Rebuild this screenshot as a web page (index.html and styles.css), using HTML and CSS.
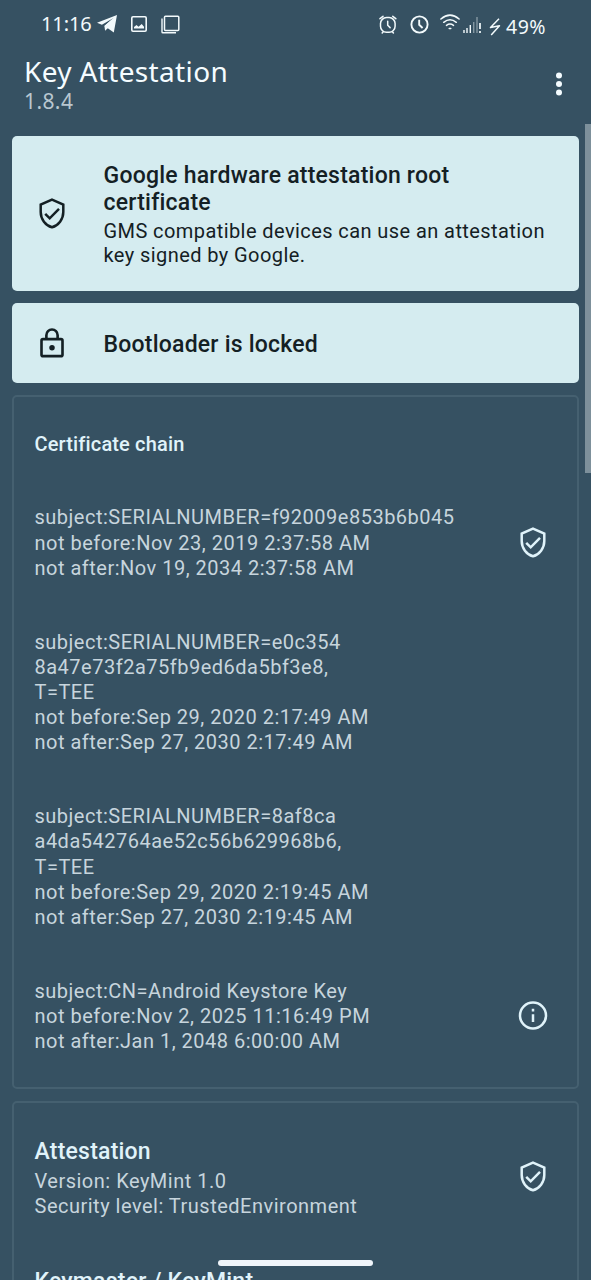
FILE: index.html
```html
<!DOCTYPE html>
<html lang="en">
<head>
<meta charset="utf-8">
<title>Key Attestation</title>
<link rel="stylesheet" href="styles.css">
</head>
<body>
<svg class="defs" width="0" height="0" aria-hidden="true">
  <symbol id="shield" viewBox="0 0 26 31">
    <path d="M13 1.700 24.300 6.500V14c0 7.200-4.800 13.400-11.300 15.300C6.500 27.400 1.700 21.200 1.700 14V6.500z" fill="none" stroke="currentColor" stroke-width="2.500"/>
    <path d="m6.200 15.800 4.500 4.500 9.300-9.500" fill="none" stroke="currentColor" stroke-width="2.500"/>
  </symbol>
</svg>
<div class="screen">
  <div class="status">
    <div class="status-left">
      <span class="clock">11:16</span>
      <svg class="ic-telegram" width="20" height="18" viewBox="0 0 20 18"><path d="M0 7.800 20 0l-3.200 17.500-6-4.300-2.700 2.600-.7-4.800L16.500 3 4.900 9.800z" fill="currentColor"/><path d="M7.400 11 17 2.500l-6.200 10.700z" fill="currentColor"/></svg>
      <svg class="ic-image" width="16" height="16" viewBox="0 0 16 16"><rect x=".8" y=".8" width="14.400" height="14.400" rx="1.200" fill="none" stroke="currentColor" stroke-width="1.600"/><path d="M3 12.500V11l2.500-2 2 1.700L10.700 8l2.300 2.800v1.700z" fill="currentColor"/></svg>
      <svg class="ic-copy" width="19" height="19" viewBox="0 0 19 19" fill="none" stroke="currentColor"><rect x="3.500" y="1.200" width="14.300" height="14.300" rx="1" stroke-width="1.500"/><path d="M1 3.500V17q0 .8.8.8H15" stroke-width="1.400"/></svg>
    </div>
    <div class="status-right">
      <svg class="ic-alarm" width="18" height="19" viewBox="0 0 18 19" fill="none" stroke="currentColor" stroke-width="1.500" stroke-linecap="round"><rect x="1.500" y="2.600" width="14.600" height="14.600" rx="6"/><path d="M1 3.700 4 1.300M16.800 3.700l-3-2.400M8.700 6.200v4l2.400 2.400M4 17l-.8 1M13.600 17l.8 1"/></svg>
      <svg class="ic-clock" width="19" height="19" viewBox="0 0 19 19" fill="none" stroke="currentColor" stroke-width="1.900"><circle cx="9.500" cy="9.500" r="8.100"/><path d="M9.200 4.800v5l3.400 3.200"/></svg>
      <svg class="ic-wifi" width="20" height="16" viewBox="0 0 20 16" fill="none" stroke="currentColor" stroke-width="1.500" stroke-linecap="round"><path d="M.9 5Q10-2.700 19.100 5M3.700 8.300q6.300-5.200 12.600 0M6.500 11.400q3.500-2.600 7 0M9.200 14.600h1.600"/></svg>
      <svg class="ic-signal" width="18" height="17" viewBox="0 0 18 17" stroke="currentColor" fill="none" stroke-width="1.400"><path d="M1 17v-3M4 17v-5M7.300 17V9"/><path d="M10.700 17V6M14 17V1" opacity=".42"/><path d="M17 7v6M17 15v2" stroke-width="1.700"/></svg>
      <svg class="ic-bolt" width="12" height="18" viewBox="0 0 12 18"><path d="M10 .8 1.500 9.600l9-1.800L2.200 17" fill="none" stroke="currentColor" stroke-width="1.500" stroke-linejoin="round"/></svg>
      <span class="battery">49%</span>
    </div>
  </div>
  <header class="appbar">
    <div>
      <div class="app-title">Key Attestation</div>
      <div class="app-version">1.8.4</div>
    </div>
    <svg class="menu" width="8" height="24" viewBox="0 0 8 24" fill="currentColor"><circle cx="4" cy="3.400" r="3"/><circle cx="4" cy="12" r="3"/><circle cx="4" cy="20.600" r="3"/></svg>
  </header>
  <main class="cards">
    <section class="card solid root">
      <svg class="shield"><use href="#shield"/></svg>
      <div>
        <h2 class="title">Google hardware attestation root<br>certificate</h2>
        <p class="body">GMS compatible devices can use an attestation<br>key signed by Google.</p>
      </div>
    </section>
    <section class="card solid boot">
      <svg class="icon" viewBox="0 0 24 24" fill="none" stroke="currentColor" stroke-width="2.100"><rect x="3.600" y="8.500" width="16.800" height="13.600" rx="1.200"/><path d="M7.500 8.500V5.300a4.500 4.500 0 0 1 9 0v3.200"/><circle cx="12" cy="15.300" r="2.200" fill="currentColor" stroke="none"/></svg>
      <h2 class="title">Bootloader is locked</h2>
    </section>
    <section class="card outline chain">
      <h3 class="subtitle">Certificate chain</h3>
      <div class="entry">
        <p>subject:SERIALNUMBER=f92009e853b6b045<br>not before:Nov 23, 2019 2:37:58 AM<br>not after:Nov 19, 2034 2:37:58 AM</p>
        <svg class="shield"><use href="#shield"/></svg>
      </div>
      <div class="entry">
        <p>subject:SERIALNUMBER=e0c354<br>8a47e73f2a75fb9ed6da5bf3e8,<br>T=TEE<br>not before:Sep 29, 2020 2:17:49 AM<br>not after:Sep 27, 2030 2:17:49 AM</p>
      </div>
      <div class="entry">
        <p>subject:SERIALNUMBER=8af8ca<br>a4da542764ae52c56b629968b6,<br>T=TEE<br>not before:Sep 29, 2020 2:19:45 AM<br>not after:Sep 27, 2030 2:19:45 AM</p>
      </div>
      <div class="entry">
        <p>subject:CN=Android Keystore Key<br>not before:Nov 2, 2025 11:16:49 PM<br>not after:Jan 1, 2048 6:00:00 AM</p>
        <svg class="icon info" viewBox="0 0 24 24" fill="none" stroke="currentColor" stroke-width="2"><circle cx="12" cy="12" r="10.400"/><path d="M12 11v6.200M12 6.600v2.200"/></svg>
      </div>
    </section>
    <section class="card outline attest">
      <div class="entry">
        <div>
          <h2 class="item-title">Attestation</h2>
          <p>Version: KeyMint 1.0<br>Security level: TrustedEnvironment</p>
        </div>
        <svg class="shield"><use href="#shield"/></svg>
      </div>
      <h2 class="item-title">Keymaster / KeyMint</h2>
    </section>
  </main>
  <div class="scrollbar"></div>
  <div class="home-bar"></div>
</div>
</body>
</html>
```
FILE: styles.css
```css
* { box-sizing: border-box; }
body { margin: 0; background: #365162; }
h2, h3, p { margin: 0; }
svg { display: block; flex: none; }
.defs { position: absolute; }

.screen {
  position: relative;
  width: 591px;
  height: 1280px;
  overflow: hidden;
  background: #365162;
  color: #e0f3fa;
  font-family: Roboto, sans-serif;
  white-space: nowrap;
}

.status {
  display: flex;
  justify-content: space-between;
  height: 48px;
  padding: 0 45px 0 41px;
  color: #f3fafc;
  font-family: "Noto Sans", sans-serif;
}
.status-left, .status-right { display: flex; align-items: center; height: 48px; }
.clock { width: 56px; margin-top: -2px; font-size: 20px; letter-spacing: -0.1px; }
.ic-image { margin-left: 14px; }
.ic-copy { margin-left: 14px; }
.ic-clock { margin-left: 13px; }
.ic-wifi { margin: -4px 0 0 11px; }
.ic-signal { margin-left: 3px; }
.ic-bolt { margin: 6px 0 0 8px; }
.battery { width: 40px; margin: 5px 0 0 5px; font-size: 19.5px; letter-spacing: 0.5px; }

.appbar {
  display: flex;
  justify-content: space-between;
  height: 88px;
  padding: 6px 28px 0 24px;
  font-family: "Noto Sans", sans-serif;
  color: #f5fcff;
}
.app-title { font-size: 28px; line-height: 34px; letter-spacing: 0.35px; }
.app-version { font-size: 21px; line-height: 27px; letter-spacing: 0.4px; color: #b9c7d0; }
.menu { margin-top: 18px; }

.cards { display: flex; flex-direction: column; gap: 12px; padding: 0 12px 0 11.5px; }
.card { border-radius: 5px; }
.solid { display: flex; align-items: center; padding-left: 25px; background: #d5ecf0; color: #142024; }
.outline { border: 2px solid #456070; padding: 0 21px; }
.root { height: 155px; padding-top: 2px; }
.boot { height: 80px; padding-top: 2px; }
.chain { height: 694px; margin-top: -0.5px; padding-top: 35px; }
.attest { height: 240px; padding-top: 35.5px; }
.icon { width: 30px; height: 31px; }
.shield { width: 26px; height: 31px; margin-right: 2px; }
.root .shield { margin: -2px 39px 0 2px; }
.boot .icon { margin: -2px 37px 0 0; }
.entry .shield { margin-top: -2px; }
.info { margin-top: -3px; }
.attest .entry .shield { margin-top: -5px; }

.title { font-size: 23px; line-height: 27px; font-weight: 500; letter-spacing: 0.22px; }
.body { margin-top: 3px; font-size: 20px; line-height: 24px; letter-spacing: 0.42px; }
.subtitle { margin-bottom: 49.900px; font-size: 20px; line-height: 24px; font-weight: 500; letter-spacing: 0.15px; }
.item-title { font-size: 23px; line-height: 27px; font-weight: 500; letter-spacing: 0.22px; }
.item-title + p { margin-top: 4px; }
.entry {
  display: flex;
  justify-content: space-between;
  align-items: center;
  margin-bottom: 48.800px;
  padding-right: 8px;
  font-size: 20px;
  line-height: 25.15px;
  letter-spacing: 0.5px;
}
.entry p { color: #c7d5dd; }

.scrollbar { position: absolute; top: 124px; right: 0; width: 6px; height: 349px; background: #7d909b; }
.home-bar { position: absolute; top: 1260px; left: 218px; width: 155px; height: 6px; border-radius: 3px; background: #f0f5fa; }
```
